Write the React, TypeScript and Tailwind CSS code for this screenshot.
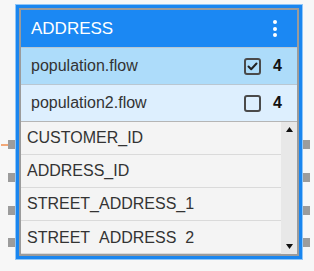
const flows = [
  { name: "population.flow", checked: true, count: 4, bg: "bg-[#addcfa]" },
  { name: "population2.flow", checked: false, count: 4, bg: "bg-[#ddeffe]" },
];

const columns = ["CUSTOMER_ID", "ADDRESS_ID", "STREET_ADDRESS_1", "STREET_ADDRESS_2"];
const portTops = ["top-[135px]", "top-[168px]", "top-[201px]", "top-[233px]"];

function Checkbox({ checked }: { checked: boolean }) {
  return (
    <div className="flex h-[17px] w-[17px] items-center justify-center rounded-[3px] border-2 border-[#4a4a4a]">
      {checked && (
        <svg width="11" height="9" viewBox="0 0 11 9">
          <path d="M1.5 4.5 L4.2 7.2 L9.5 1.5" fill="none" stroke="#222" strokeWidth="2" strokeLinecap="round" strokeLinejoin="round" />
        </svg>
      )}
    </div>
  );
}

export default function App() {
  return (
    <div className="h-[271px] w-[314px] bg-[#f7f7f7] pl-[15px] pt-[4px] font-['Liberation_Sans',Arial,sans-serif]">
      <div className="relative h-[256px] w-[288px] border border-[#8fc6f8]">
        <div className="h-full w-full border-[3px] border-[#1a86ef]">
          <div className="flex h-full w-full flex-col border-2 border-[#9b9b9b] bg-[#f4f4f4]">
            <header className="flex h-[37px] items-center justify-between bg-[#1b88f3] pl-[10px] pr-[20px]">
              <span className="text-[17px] text-white">ADDRESS</span>
              <div className="flex flex-col gap-[2.5px]">
                <span className="h-[4px] w-[4px] rounded-full bg-white" />
                <span className="h-[4px] w-[4px] rounded-full bg-white" />
                <span className="h-[4px] w-[4px] rounded-full bg-white" />
              </div>
            </header>
            {flows.map((f) => (
              <div
                key={f.name}
                className={`flex h-[37px] items-center justify-between border-t border-[#b9c7d2] pl-[10px] pr-[15px] ${f.bg}`}
              >
                <span className="text-[16px] text-[#333]">{f.name}</span>
                <div className="flex items-center gap-[12px]">
                  <Checkbox checked={f.checked} />
                  <span className="text-[16px] font-bold text-[#111]">{f.count}</span>
                </div>
              </div>
            ))}
            <div className="flex flex-1 border-t border-[#b5b5b5]">
              <div className="flex flex-1 flex-col">
                {columns.map((c, i) => (
                  <div key={c} className="flex h-[33px] items-center border-b border-[#dadada] pl-[6px] text-[16px] text-[#333]">
                    <span className={i === columns.length - 1 ? "h-[15px] overflow-hidden leading-none" : ""}>{c}</span>
                  </div>
                ))}
              </div>
              <div className="flex w-[16px] flex-col items-center justify-between bg-[#e8e8e8] py-[5px]">
                <svg width="7" height="5" viewBox="0 0 7 5">
                  <path d="M3.5 0 L7 5 L0 5 Z" fill="#111" />
                </svg>
                <svg width="7" height="5" viewBox="0 0 7 5">
                  <path d="M0 0 L7 0 L3.5 5 Z" fill="#111" />
                </svg>
              </div>
            </div>
          </div>
        </div>
        <div className="absolute left-[-15px] top-[139px] h-[2px] w-[8px] bg-[#f2a878]" />
        {portTops.map((t) => (
          <div key={"l" + t} className={`absolute left-[-8px] h-[9px] w-[7px] bg-[#9c9c9c] ${t}`} />
        ))}
        {portTops.map((t) => (
          <div key={"r" + t} className={`absolute right-[-8px] h-[9px] w-[7px] bg-[#9c9c9c] ${t}`} />
        ))}
      </div>
    </div>
  );
}
